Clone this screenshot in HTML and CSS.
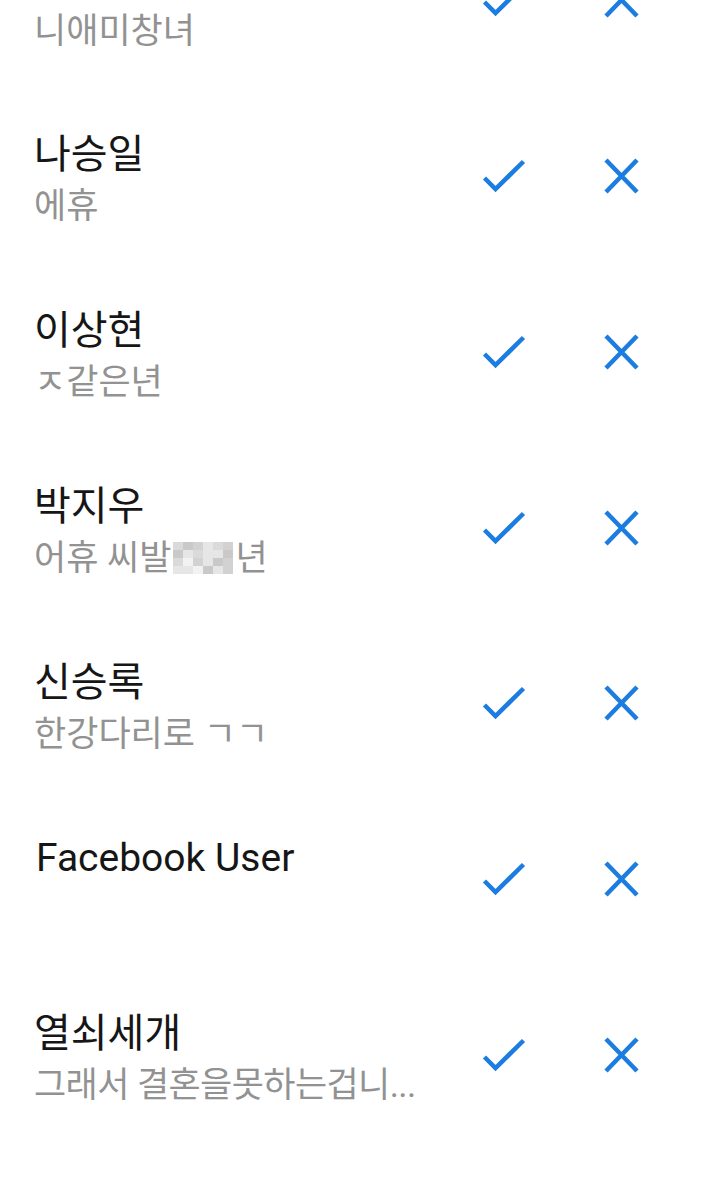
FILE: index.html
```html
<!DOCTYPE html>
<html lang="ko">
<head>
<meta charset="utf-8">
<title>메시지 요청</title>
<link rel="stylesheet" href="styles.css">
</head>
<body>
<ul class="list">
  <li class="row">
    <div class="text"><div class="name">&nbsp;</div><div class="sub">니애미창녀</div></div>
    <div class="actions">
      <svg class="icon" viewBox="0 0 48 48"><polyline points="4.5,26 15.5,37 43.5,9.5"/></svg>
      <svg class="icon" viewBox="0 0 48 48"><path d="M9 8 L40 40 M40 8 L9 40"/></svg>
    </div>
  </li>
  <li class="row">
    <div class="text"><div class="name">나승일</div><div class="sub">에휴</div></div>
    <div class="actions">
      <svg class="icon" viewBox="0 0 48 48"><polyline points="4.5,26 15.5,37 43.5,9.5"/></svg>
      <svg class="icon" viewBox="0 0 48 48"><path d="M9 8 L40 40 M40 8 L9 40"/></svg>
    </div>
  </li>
  <li class="row">
    <div class="text"><div class="name">이상현</div><div class="sub">ㅈ같은년</div></div>
    <div class="actions">
      <svg class="icon" viewBox="0 0 48 48"><polyline points="4.5,26 15.5,37 43.5,9.5"/></svg>
      <svg class="icon" viewBox="0 0 48 48"><path d="M9 8 L40 40 M40 8 L9 40"/></svg>
    </div>
  </li>
  <li class="row">
    <div class="text"><div class="name">박지우</div><div class="sub">어휴 씨발<span class="mosaic"><i></i><i></i><i></i><i></i><i></i><i></i><i></i><i></i><i></i><i></i><i></i><i></i><i></i><i></i><i></i><i></i><i></i><i></i><i></i><i></i><i></i><i></i><i></i><i></i></span>년</div></div>
    <div class="actions">
      <svg class="icon" viewBox="0 0 48 48"><polyline points="4.5,26 15.5,37 43.5,9.5"/></svg>
      <svg class="icon" viewBox="0 0 48 48"><path d="M9 8 L40 40 M40 8 L9 40"/></svg>
    </div>
  </li>
  <li class="row">
    <div class="text"><div class="name">신승록</div><div class="sub">한강다리로 ㄱㄱ</div></div>
    <div class="actions">
      <svg class="icon" viewBox="0 0 48 48"><polyline points="4.5,26 15.5,37 43.5,9.5"/></svg>
      <svg class="icon" viewBox="0 0 48 48"><path d="M9 8 L40 40 M40 8 L9 40"/></svg>
    </div>
  </li>
  <li class="row">
    <div class="text"><div class="name latin">Facebook User</div><div class="sub">&nbsp;</div></div>
    <div class="actions">
      <svg class="icon" viewBox="0 0 48 48"><polyline points="4.5,26 15.5,37 43.5,9.5"/></svg>
      <svg class="icon" viewBox="0 0 48 48"><path d="M9 8 L40 40 M40 8 L9 40"/></svg>
    </div>
  </li>
  <li class="row">
    <div class="text"><div class="name">열쇠세개</div><div class="sub tight">그래서 결혼을못하는겁니...</div></div>
    <div class="actions">
      <svg class="icon" viewBox="0 0 48 48"><polyline points="4.5,26 15.5,37 43.5,9.5"/></svg>
      <svg class="icon" viewBox="0 0 48 48"><path d="M9 8 L40 40 M40 8 L9 40"/></svg>
    </div>
  </li>
</ul>
</body>
</html>
```

FILE: styles.css
```css
html, body {
  margin: 0;
  padding: 0;
  background: #ffffff;
}
body {
  width: 720px;
  height: 1178px;
  overflow: hidden;
  font-family: Roboto, "Noto Sans CJK KR", sans-serif;
}
.list {
  list-style: none;
  margin: -87.5px 0 0 0;
  padding: 0;
}
.row {
  display: flex;
  align-items: center;
  height: 175.75px;
  padding: 0 75px 0 34px;
  box-sizing: border-box;
}
.text {
  flex: 1;
  align-self: flex-start;
  padding-top: 43px;
  min-width: 0;
}
.name {
  font-size: 40px;
  line-height: 48px;
  color: #161616;
  white-space: nowrap;
}
.name.latin {
  font-size: 39px;
  padding-left: 2px;
}
.sub {
  margin-top: 5px;
  font-size: 35px;
  line-height: 46px;
  color: #929292;
  white-space: nowrap;
}
.sub.tight {
  letter-spacing: -0.6px;
}
.actions {
  display: flex;
  align-items: center;
  gap: 69px;
}
.icon {
  width: 48px;
  height: 48px;
  fill: none;
  stroke: #1c7de0;
  stroke-width: 4.5;
  stroke-linecap: butt;
  stroke-linejoin: miter;
  display: block;
}
.mosaic {
  display: inline-grid;
  grid-template-columns: repeat(6, 10px);
  grid-template-rows: repeat(4, 8px);
  vertical-align: middle;
  margin: -6px 2px 0 2px;
}
.mosaic i { background: #e6e6e6; }
.mosaic i:nth-child(3n) { background: #d2d2d2; }
.mosaic i:nth-child(4n+1) { background: #dadada; }
.mosaic i:nth-child(7n) { background: #f2f2f2; }
.mosaic i:nth-child(5n+2) { background: #c9c9c9; }
```
